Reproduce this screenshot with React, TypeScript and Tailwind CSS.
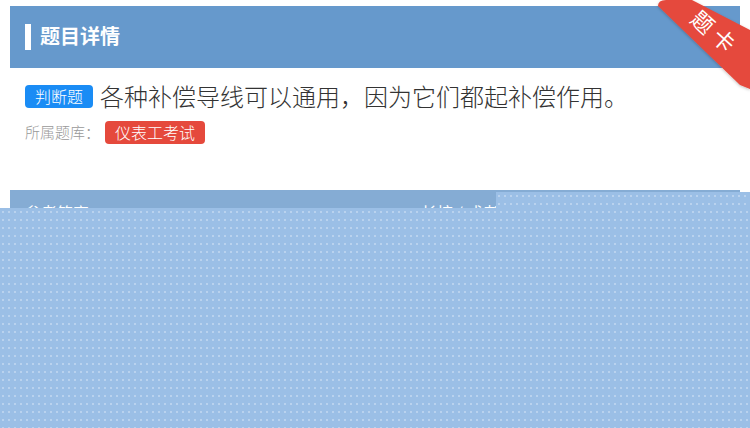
const cjk = { fontFamily: '"Noto Sans CJK SC", "Noto Sans", sans-serif' };

function Ribbon() {
  return (
    <svg
      className="absolute top-0 right-0"
      width="110"
      height="100"
      viewBox="0 0 110 100"
      xmlns="http://www.w3.org/2000/svg"
    >
      <defs>
        <filter id="rs" x="-20%" y="-20%" width="140%" height="140%">
          <feDropShadow dx="0" dy="1" stdDeviation="1.5" floodColor="#000" floodOpacity="0.25" />
        </filter>
      </defs>
      {/* folded end */}
      <polygon points="99,66 110,66 110,89" fill="#b8352b" />
      <path
        d="M18 6 Q18 0 26 0 L52 0 L110 30 L110 89 L100 85 Z"
        fill="#e5493c"
        filter="url(#rs)"
      />
      <text
        x="64"
        y="21"
        fill="#fff"
        fontSize="22"
        textAnchor="middle"
        dominantBaseline="central"
        transform="rotate(42 64 21)"
        style={cjk}
      >
        题
      </text>
      <text
        x="85"
        y="39"
        fill="#fff"
        fontSize="22"
        textAnchor="middle"
        dominantBaseline="central"
        transform="rotate(42 85 39)"
        style={cjk}
      >
        卡
      </text>
    </svg>
  );
}

export default function App() {
  return (
    <div className="relative w-[750px] h-[428px] overflow-hidden bg-white pt-[6px] px-[10px]" style={cjk}>
      {/* Header */}
      <div className="h-[62px] bg-[#6699cc] flex items-center pl-[15px]">
        <span className="w-[6px] h-[26px] bg-white mr-[9px]" />
        <span className="text-[20px] font-bold text-white leading-none pb-[3px]">题目详情</span>
      </div>

      {/* Question */}
      <div className="px-[15px]">
        <div className="mt-[12px] h-[32px] flex items-center">
          <span className="h-[23px] px-[10px] rounded-[4px] bg-[#1a8cf5] text-white text-[16px] leading-[23px] font-light">
            判断题
          </span>
          <span className="ml-[7px] text-[24px] text-[#333] leading-none font-light">
            各种补偿导线可以通用，因为它们都起补偿作用。
          </span>
        </div>
        <div className="mt-[9px] h-[23px] flex items-center">
          <span className="text-[15px] text-[#999] font-light">所属题库：</span>
          <span className="ml-[5px] h-[23px] px-[10px] rounded-[4px] bg-[#e5493c] text-white text-[16px] leading-[22px] font-light">
            仪表工考试
          </span>
        </div>
      </div>

      {/* Answer section */}
      <div className="mt-[46px] h-[60px] bg-[#85acd4] flex items-start pt-[10px] px-[15px] text-white text-[16px]">
        <span>参考答案</span>
        <span className="ml-[332px]">长按 / 或者扫码查看答案</span>
      </div>

      {/* Mask overlay */}
      <div className="absolute left-[496px] top-[192px] w-[254px] h-[16px] bg-[#9bbfe6] bg-[radial-gradient(circle,rgba(255,255,255,0.3)_0.8px,transparent_1.1px)] bg-[length:6px_8px]" />
      <div className="absolute left-0 top-[208px] w-[750px] h-[220px] bg-[#9bbfe6] bg-[radial-gradient(circle,rgba(255,255,255,0.3)_0.8px,transparent_1.1px)] bg-[length:6px_8px]" />

      <Ribbon />
    </div>
  );
}
